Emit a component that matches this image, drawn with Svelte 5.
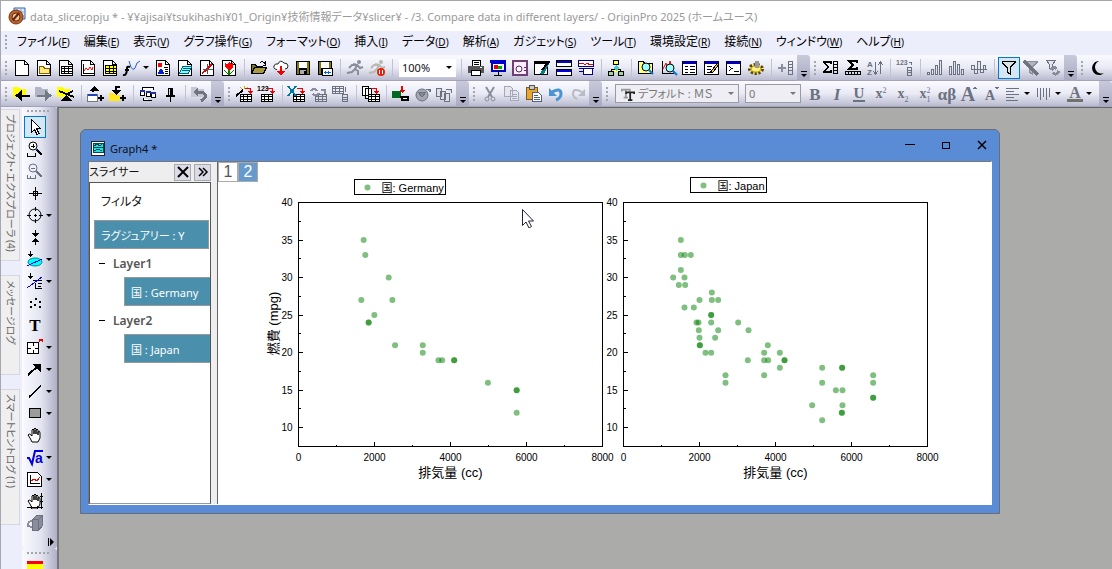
<script lang="ts">
    type Item = { icon?: string; label?: string; kind?: string; drop?: boolean; active?: boolean };

    const path = (d: string, stroke = '#000', fill = 'none', width = 1) =>
        `<path d="${d}" stroke="${stroke}" fill="${fill}" stroke-width="${width}"/>`;
    const solid = (d: string, fill = '#000') => `<path d="${d}" fill="${fill}" stroke="none"/>`;
    const smooth = (inner: string) => `<g shape-rendering="auto">${inner}</g>`;

    const GREY = '#6b7180';
    const page = path('M1.5.5h9l4 4v11h-13zM10.5.5v4h4', '#000', '#fff');
    const grid = (x: number, y: number, stroke = '#000', fill = '#fff') =>
        path(`M${x + 0.5} ${y + 0.5}h11v7h-11zM${x} ${y + 2.5}h11M${x} ${y + 5}h11M${x + 3.5} ${y}v8M${x + 7} ${y}v8`, stroke, fill);
    const folder = (fill = '#ffff00') => solid('M-1 1h6l1 2h6v8h-13z', fill);
    const redArrow = path('M8 2.5h5v3', '#e00') + solid('M10.5 5h5.5l-2.7 3z', '#e00');
    const lens = (x: number, y: number, c = '#000', fill = '#9ff') =>
        smooth(`<circle cx="${x}" cy="${y}" r="4" fill="${fill}" stroke="${c}"/>` + path(`M${x + 3} ${y + 3}l4 4`, c === '#000' ? '#0078d7' : c, 'none', 2));
    const windowFrame = path('M.5 1.5h14v13h-14z', '#000', '#fff') + solid('M1 1h13v3H1z', '#0000b0');
    const runner = (c: string) => smooth(path('M6 4L10 5 8 9 11 11 11 15M8 9L5 12 0 13M10 5L13 8 16 7M9 5L5 5 2 8', c, 'none', 2) + `<circle cx="12" cy="2" r="2" fill="${c}" stroke="none"/>`);
    const bars = (d: string) => path(d, GREY, '#e4e5f0');
    const disk = solid('M1 1h14v14H1z') + solid('M2 2h2v12H2zM12 2h2v12h-2z', '#807800') + solid('M4 2h8v6H4z', '#fff') + solid('M5 10h6v4H5z', '#aaa') + solid('M9 11h2v3H9z');
    const funnel = (c: string, fill: string) => path('M1 1.5h13v1l-5 5v6.5l-3-2v-4.5l-5-5z', c, fill);
    const glyph = (text: string, size = 17, x = 8, y = 14, extra = '') =>
        `<text x="${x}" y="${y}" text-anchor="middle" font-family="Liberation Serif, serif" font-size="${size}" font-weight="bold" fill="${GREY}" stroke="none" ${extra}>${text}</text>`;
    const small = (text: string, x: number, y: number, size = 7, fill = '#000') =>
        `<text x="${x}" y="${y}" font-size="${size}" font-weight="bold" font-family="Liberation Sans, sans-serif" fill="${fill}" stroke="none">${text}</text>`;
    const hand = smooth(path('M5 15L3 11 1 8Q2 6 4 8L5 9V3Q6 1 7 3V7 2Q8 0 9 2V7 3Q10 1 11 3V8 5Q13 3 13 6V11L11 15H5z', '#000', '#fff'));

    const icons: Record<string, string> = {
        newPage: page,
        newFolder: page + path('M3.5 6.5h4l1 2h5v5h-10z', '#806000', '#ffe880'),
        book: page + grid(3, 6),
        graph: page + path('M3.5 4v9.5H14') + smooth(path('M4 11L6 8 8 10 10 7 12 10 13 7', '#f00')),
        matrix: page + path('M3.5 5.5h11v8h-11zM3 8.5h12M3 11h12M7.5 5v9M11 5v9', '#000', '#ff0'),
        func: smooth(path('M5 1Q9 17 13 3L16 1', '#2060d0') + path('M-1 15Q3 16 3 8Q3 6 6 7M1 10h4', '#000', 'none', 2)),
        layout: page + solid('M3 3h4v4H3z', '#f00') + solid('M3 14q1-5 3-5t3 5z', '#0020d0') + path('M9 7.5h4M10 9.5h3M10 11.5h3M10 13.5h3'),
        notes: page + path('M5.5 6.5h9l-3 7h-9zM6 8.5h7M5 10.5h7', '#006080', '#80ffff'),
        excel: page + path('M3 13.5L13 4', '#d00', 'none', 2) + path('M8.5 4v10M4 9.5h10', '#555'),
        flower: page + solid('M4 3l2 1 2-2 2 2 2-1v4l-3 3H7L4 7z', '#f00') + solid('M7 10h2v5H7zM3 10l4 3v2zM13 10l-4 3v2z', '#008000'),
        open: path('M.5 13.5v-9h4l1 2h6v2', '#000', '#808000') + path('M.5 13.5l3-6h12l-3 6z', '#000', '#a89840') + path('M9 3q3-3 5 1M14.5 1v4h-3'),
        cloud: smooth(path('M4 9.5Q0 9 1 6Q2 3 5 4Q7-1 11 3Q15 3 15 6Q15 9 12 9', '#222', '#fff')) + path('M8 6v8', '#e00', 'none', 2) + solid('M4 11h8l-4 5z', '#e00'),
        save: disk,
        saveAs: disk + path('M5.5 8.5h10v7h-10z', '#000', '#fff') + path('M7 12.5h7M8.5 11v3M11.5 11v3', '#06c'),
        run: runner('#8a8e9c'),
        runStop: runner('#b8b8b4') + smooth('<circle cx="12" cy="12" r="4" fill="#e8200c" stroke="none"/>') + path('M10.5 10v4M13.5 10v4', '#fff'),
        print: path('M4.5 6.5v-6h8v6M6 2.5h5M6 4.5h5', '#000', '#fff') + solid('M0 6h16v7H0z', '#555') + path('M3.5 10.5h9v5h-9z', '#000', '#fff') + solid('M12 7h2v1h-2z', '#fff'),
        slide: path('M1.5 2.5h13v8h-13z', '#0000c0', '#fff', 2) + solid('M0 0h16v3H0z', '#0000d0') + solid('M4 5h4v4H4z', '#e00') + solid('M8 6h4v3H8z', '#0a0') + path('M8 11v4M4 15.5h8'),
        camera: path('M1 1h14v14H1z', '#704070', '#fcecff', 2) + smooth('<circle cx="7" cy="9" r="3" fill="#fff" stroke="#602060"/>') + path('M12 7.5h2M12 10.5h2', '#602060'),
        pen: path('M.5 2.5h13v12H.5z', '#000', '#fff') + solid('M0 1h14v3H0z') + solid('M16 2L10 14H6l2-4z', '#008088') + path('M15.5 1L8 10', '#000', 'none', 2),
        stack: path('M.5.5h15v6H.5zM.5 9.5h15v6H.5z', '#000', '#fff') + solid('M1 1h14v2H1zM1 10h14v2H1z', '#0000e0'),
        split: path('M.5.5h15v6H.5z', '#000080', '#fff') + path('M1 4L5 3 7 5 9 3 12 5 15 4', '#e00') + path('M.5 8.5h15M5.5 9v5h9V9M1 11.5h5', '#000080', '#fff'),
        tree: path('M8 5v3M3.5 12V9h9v3M5.5.5h5v4h-5z', '#000', '#ffff60') + path('M.5 11.5h5v4h-5zM10.5 11.5h5v4h-5z', '#000', '#9fd0a0') + solid('M8 5l3 3-3 3-3-3z', '#4cc'),
        findFolder: path('M.5 1.5h5l1 2h8v10H.5z', '#000', '#ffff80') + lens(8, 7),
        findGraph: path('M2.5 1v12H14') + smooth(path('M3 9L6 3 8 10 10 1 12 8', '#e00')) + lens(10, 8),
        list: windowFrame + path('M3 6.5h3M8 6.5h5M3 9.5h3M8 9.5h5M3 12.5h3M8 12.5h5'),
        edit: windowFrame + path('M3 6.5h5M3 9.5h4M3 12.5h3') + path('M14 4L7 13', '#000', '#ff0', 3) + path('M14 4L8 12', '#fc0'),
        command: windowFrame + path('M3 6.5l3 2-3 2M8 11.5h5'),
        gear: smooth('<ellipse cx="8" cy="9" rx="6" ry="4" stroke="#5a4800" stroke-width="4" stroke-dasharray="2 1.5" fill="#f8d820"/><ellipse cx="8" cy="9" rx="5" ry="3" fill="#fff080" stroke="#c8a800"/>') + solid('M7 1h4v7H7z', '#999'),
        addCol: path('M0 8h8M4 4v8', '#8a8e9c', 'none', 2) + path('M10.5 1.5h4v13h-4zM10 4.5h5M10 7.5h5M10 10.5h5', GREY),
        sumCol: path('M8 3.5V2H1l4 5-4 5h7v-2', '#000', 'none', 1.5) + path('M10.5 1.5h4v12h-4zM10 4.5h5M10 7.5h5M10 10.5h5'),
        sumRow: path('M12 3V1H4l4 4-4 4h8V7', '#000', 'none', 1.5) + path('M.5 11.5h15v3H.5zM3.5 11v4M6.5 11v4M9.5 11v4M12.5 11v4'),
        sort: small('A', 0, 7, 8, GREY) + small('Z', 0, 15, 8, GREY) + path('M8.5 2v12M6 11l2.5 3L11 11M13.5 14V2M11 5l2.5-3L16 5', GREY),
        numCol: small('123', -1, 5, 7, GREY) + path('M12 2.5h2v2M10.5 7.5h4v8h-4zM10 10h5M10 12.5h5', GREY),
        barsUp: bars('M.5 12.5h2v2h-2zM4.5 9.5h2v5h-2zM8.5 5.5h2v9h-2zM12.5.5h2v14h-2z'),
        barsDown: bars('M.5 6.5h2v8h-2zM4.5 1.5h2v13h-2zM8.5 4.5h2v10h-2zM12.5 9.5h2v5h-2z'),
        barsMid: bars('M.5 5.5h3v4h-3zM3.5 9.5h3v4h-3zM6.5 1.5h3v8h-3zM9.5 9.5h3v3h-3zM12.5 5.5h2v4h-2zM0 9.5h16'),
        filter: funnel('#000', '#dde4e4'),
        filterOff: funnel('#8a8e9c', '#b0b4c0') + path('M1 1l14 14', '#70747f', 'none', 3),
        filterRedo: path('M1.5.5h9l-3 4v5l-3-1v-4z', GREY, '#e4e5f0') + path('M6 10q3-4 6-1M14 11q-3 5-6 2', '#8a8e9c', 'none', 3),
        moon: smooth(solid('M9 1A7 7 0 1 0 14 13A6.5 6.5 0 0 1 9 1z')),
        back: folder() + path('M4 9.5h12', '#000', 'none', 2) + solid('M8 4v11L1 9.5z'),
        forward: folder('#b2b5c4') + path('M1 9.5h11', '#747986', 'none', 2) + solid('M9 4v11l7-5.5z', '#747986'),
        up: folder() + path('M1 5l15 6', '#000', 'none', 2) + solid('M2 15h12l-6-6z') + path('M9 8l6-3', '#000', 'none', 2),
        importUp: path('M-.5 8.5h10v7h-10z', '#777', '#fff') + solid('M0 8h9v2H0z', '#2244bb') + path('M5 6V4h5', '#000', 'none', 2) + solid('M1 5l5-5 5 5z') + path('M13 9v6M10 12h6', '#000', 'none', 2),
        importDown: solid('M-1 7h5l1 2h5v6H-1z', '#ffe820') + path('M10 1H6v4', '#000', 'none', 2) + solid('M1 4h10L6 9z') + path('M13 9v6M10 12h6', '#000', 'none', 2),
        exchange: path('M2.5 4V1.5h11V4M3.5 12v2.5h8M.5 4.5h4v5h-4zM6.5 5.5h4v5h-4zM11.5 6.5h4v5h-4z', '#000', '#fff') + path('M0 5h5M6 6h5M11 7h5', '#2030a0', 'none', 2),
        pin: solid('M6 2h5v8H6zM4 9h9v2H4zM8 10h1v6H8z') + path('M7.5 3v6', '#ddd'),
        undoGrey: folder('#c6c8d4') + path('M4 6h6q5 2 3 6l-4 3', '#70747f', 'none', 3) + solid('M6 1v9L1 6z', '#70747f'),
        wand: grid(3, 8) + path('M-1 10L6 4', '#000', 'none', 2) + path('M7 0v3M3 1l2 2M11 1l-2 2', '#d0b000') + redArrow,
        num123: small('123', -2, 5) + grid(2, 8) + redArrow,
        xl: grid(4, 8) + path('M-1 0l8 10M7 0L-1 10', '#0078a0', 'none', 2) + redArrow,
        refresh: grid(4, 8, GREY, '#dcdde8') + path('M0 5q3-5 6 0M8 7q-3 4-6 1M10 3.5h4v4', '#8a8e9c', 'none', 2),
        tables: grid(-1, 0, GREY, '#eeeef6') + path('M9.5 8.5h5v7h-5zM9 11h6M9 13h6M12.500 1v5', GREY),
        sheets: path('M-.5.5h6v9h-6zM2.5 2.5h6v10h-6z', '#000', '#fff') + grid(5, 8) + redArrow,
        plug: solid('M-1 5h9v7h-9z', '#006820') + path('M9 0v5', '#e00', 'none', 2) + solid('M6 4h6L9 7z', '#e00') + path('M7 11h8v3H9v-3', '#000', '#fff', 2),
        globe: smooth(`<circle cx="7" cy="9" r="6" fill="#a4a7b2" stroke="${GREY}"/>`) + path('M3 6l4 5 4-5zM11 3h4v3', GREY, '#858995'),
        copies: path('M-.5 2.5h5v8h-5zM3.5 5.5h5v8h-5zM7.5 7.5h5v8h-5zM9 3.5h5v3', GREY, '#dddee9'),
        cut: smooth(path('M4 1l6 10M12 1L6 11', '#8a8e9c', 'none', 2) + '<circle cx="5" cy="13" r="2" stroke="#8a8e9c"/><circle cx="11" cy="13" r="2" stroke="#8a8e9c"/>'),
        copy: path('M.5.5h6l2 2v8h-8zM6.5 4.5h6l2 2v8h-8zM8 8.5h5M8 10.5h5M8 12.5h5', '#a4a7b5', '#e4e5ee'),
        paste: path('M.5 1.5h11v12H.5z', '#7a5a20', '#e8a830') + path('M3.5-.5h5v4h-5z', '#555', '#ccc') + path('M6.5 6.5h6l3 3v6h-9zM8 9.5h4M8 11.5h6M8 13.5h6', '#506080', '#fff'),
        undo: smooth(path('M4 6q9-5 9 2q0 4-5 6', '#4a94d4', 'none', 3) + solid('M1 2v8h8z', '#4a94d4')),
        redo: smooth(path('M12 6q-9-5-9 2q0 3 4 5', '#b8bac6', 'none', 2) + solid('M15 3v7H8z', '#b8bac6')),
        bold: glyph('B'),
        italic: glyph('I', 17, 8, 14, 'font-style="italic"'),
        underline: glyph('U', 15, 8, 12) + solid('M2 14h12v2H2z', GREY),
        sup: glyph('x<tspan font-size="8" font-weight="normal" dy="-5">2</tspan>', 14, 8, 12),
        sub: glyph('x<tspan font-size="8" font-weight="normal" dy="4">2</tspan>', 14, 8, 12),
        supsub: glyph('x<tspan font-size="8" font-weight="normal" dy="-5">2</tspan><tspan font-size="8" font-weight="normal" dx="-4" dy="9">1</tspan>', 14, 8, 12),
        greek: glyph('αβ'),
        bigger: glyph('A', 20, 7, 15) + solid('M12 3l2-3 2 3z', GREY),
        smaller: glyph('A', 14, 7, 14) + solid('M11 1h5l-2 3z', GREY),
        align: path('M1 2.5h13M1 5.5h8M1 8.5h13M1 11.5h8M1 14.5h12', GREY),
        lines: path('M1.5 2v9M4.5 2v12M7.5 2v9M10.5 2v12M13.5 2v9', GREY),
        fontColor: glyph('A', 16, 8, 12) + solid('M0 13h16v3H0z', '#70706c'),
        pointer: path('M4.5.5v13l3-3 2.5 5 2-1-2.5-5h4z', '#000', '#fff'),
        zoomIn: lens(6, 5, '#000', '#fff') + path('M4 5h4M6 3v4M.5 12v3h8v-3') + path('M10 9l5 5', '#000', 'none', 2),
        zoomOut: lens(6, 5, GREY, '#eef') + path('M4 5h4M.5 12v3h8v-3M3.5 13v2', GREY) + path('M10 9l5 5', GREY, 'none', 2),
        cross: path('M8.5 2v13M2 8.5h13M6.5 6.5h4v4h-4z'),
        target: smooth('<circle cx="8" cy="8" r="6" stroke="#000"/>') + path('M8.5 0v4M8.5 12v4M0 8.5h4M12 8.5h4M7 8.5h3M8.5 7v3'),
        squeeze: path('M8 1v4M8 12v4') + solid('M4 4h8L8 8zM4 13h8L8 9z'),
        lasso: smooth('<ellipse cx="8" cy="11" rx="7" ry="4" fill="#0ff" stroke="#088"/>') + path('M0 15L15 8', '#00f') + path('M3 0v3') + solid('M0 3h7L3.5 6z'),
        maskLine: path('M6 7.5h9M8.5 10v6M8 15.5h7M11 10.5h4M11 13h3') + path('M0 15L15 4', '#00f') + path('M3 0v3') + solid('M0 3h7L3.5 6z'),
        dots: solid('M8 3h2v2H8zM3 6h2v2H3zM12 6h2v2h-2zM7 9h2v2H7zM3 11h2v2H3zM12 11h2v2h-2z'),
        text: '<text x="8" y="14" text-anchor="middle" font-family="Liberation Serif, serif" font-size="17" font-weight="bold" fill="#000" stroke="none">T</text>',
        scale: path('M.5 3.5h11v11H.5zM1 9h3M8 9h3M6 4v3M6 11v3', '#000', '#fff') + path('M12 3V0h3v3M12 1.5h3', '#e00'),
        arrow: path('M1 14L11 5', '#000', 'none', 2) + solid('M5 3h9v9z'),
        line: path('M2 14L14 3', '#000', 'none', 1.5),
        rect: path('M2.5 3.5h11v9h-11z', '#000', '#9c9c9c'),
        hand,
        sqrt: smooth(path('M0 9h2l3 6 3-13h8', '#00d', 'none', 2)) + small('a', 8, 14, 14, '#00d'),
        graphTool: path('M.5 1.5h10l4 4v10H.5z', '#000', '#fff') + path('M3.5 4v8.5H13') + path('M4 10l3-2 3 2 3-4', '#e00'),
        pan: hand + path('M14.5 0v16M0 14.5h16M13 3.5h3M13 8.5h3M4 13v3M10 13v3'),
        cube: path('M5.5 4.5l4-4h6v10l-4 5h-6zM5.5 4.5h6v11M11.5 4.5l4-4', GREY, '#8a8e9c') + path('M5 6q-5 1-4 5l4 1', '#8a8e9c', 'none', 2)
    };

    const btn = (icon: string, extra: Partial<Item> = {}): Item => ({ icon, ...extra });
    const row = (names: string): Item[] =>
        names.split(' ').map((n) => (['|', '>', ':'].includes(n) ? { kind: n } : n.endsWith('+') ? btn(n.slice(0, -1), { drop: true }) : btn(n)));

    const topRow: Item[] = [
        ...row(': newPage newFolder book graph matrix func+ layout notes excel flower | open cloud save saveAs | run runStop |'),
        { kind: 'zoom' },
        ...row('| print slide camera pen stack split | tree | findFolder findGraph list edit command gear | addCol > : sumCol sumRow sort | numCol | barsUp barsDown barsMid |'),
        btn('filter', { active: true }),
        ...row('filterOff filterRedo > : moon')
    ];
    const secondRow: Item[] = [
        ...row(': back forward up | importUp importDown | exchange pin | undoGrey > : wand num123 | xl refresh tables | sheets | plug globe copies > : cut copy paste undo redo > :'),
        { kind: 'font' },
        { kind: 'size' },
        ...row('bold italic underline sup sub supsub greek bigger smaller align+ lines+ fontColor+ >')
    ];
    const tools: Item[] = [
        btn('pointer', { active: true }),
        ...row('zoomIn zoomOut cross target+ squeeze lasso+ maskLine+ dots text scale+ arrow+ line+ rect+ hand sqrt+ graphTool+ pan cube')
    ];

    const menus = [
        ['ファイル', 'F'], ['編集', 'E'], ['表示', 'V'], ['グラフ操作', 'G'], ['フォーマット', 'O'],
        ['挿入', 'I'], ['データ', 'D'], ['解析', 'A'], ['ガジェット', 'S'], ['ツール', 'T'],
        ['環境設定', 'R'], ['接続', 'N'], ['ウィンドウ', 'W'], ['ヘルプ', 'H']
    ];
    const docks = ['プロジェクト・エクスプローラ (4)', 'メッセージログ', 'スマートヒントログ (1)'];
    const layers = [
        { name: 'Layer1', value: '国 : Germany' },
        { name: 'Layer2', value: '国 : Japan' }
    ];

    // [displacement, mpg]
    const germany = [
        [1714, 35], [1758, 33], [2374, 30], [1653, 27], [2470, 27], [1996, 25], [1846, 24], [1846, 24], [2541, 21],
        [3270, 21], [3270, 20], [3683, 19], [3780, 19], [4097, 19], [4097, 19], [4985, 16], [5741, 15], [5741, 15], [5741, 12]
    ];
    const japan = [
        [1509, 35], [1509, 33], [1614, 33], [1772, 33], [1509, 31], [1307, 30], [1605, 30], [1456, 29], [1623, 29],
        [2325, 28], [2000, 27], [2325, 27], [2491, 27], [1605, 26], [1851, 26], [2307, 25], [2307, 25], [1921, 24],
        [1974, 24], [2307, 24], [3018, 24], [1982, 23], [2491, 23], [3290, 23], [2000, 22], [2412, 22], [2009, 21],
        [2009, 21], [3798, 21], [2158, 20], [2307, 20], [3702, 20], [4114, 20], [3272, 19], [3702, 19], [3807, 19],
        [4237, 19], [4237, 19], [4114, 18], [5228, 18], [5754, 18], [5754, 18], [2684, 17], [3702, 17], [6570, 17],
        [2684, 16], [5228, 16], [6570, 16], [5588, 15], [5763, 15], [6570, 14], [6570, 14], [4965, 13], [5763, 13],
        [5746, 12], [5746, 12], [5228, 11]
    ];
    const plots = [
        { x: 80, country: 'Germany', points: germany, legend: { x: 56, y: -23, w: 91 }, ylabel: true },
        { x: 405, country: 'Japan', points: japan, legend: { x: 67, y: -25, w: 76 }, ylabel: false }
    ];
    const W = 304;
    const H = 244;
    const sx = (v: number) => (v / 8000) * W;
    const sy = (v: number) => ((40 - v) / 32.5) * H;
    const yTicks = [40, 35, 30, 25, 20, 15, 10];
    const xTicks = [0, 2000, 4000, 6000, 8000];

    let activeLayer = $state(2);
    let zoom = $state('100%');
</script>

{#snippet toolButton(item: Item)}
    <button class="tool" class:active={item.active} aria-label={item.icon}>
        <svg viewBox="0 0 16 16" fill="none" stroke="#000" shape-rendering="crispEdges">{@html icons[item.icon ?? '']}</svg>
    </button>
    {#if item.drop}
        <button class="drop" aria-label="{item.icon} options"></button>
    {/if}
{/snippet}

{#snippet toolbar(items: Item[])}
    <div class="toolbar">
        {#each items as item}
            {#if item.kind === ':'}
                <i class="grip"></i>
            {:else if item.kind === '|'}
                <i class="sep"></i>
            {:else if item.kind === '>'}
                <button class="overflow" aria-label="More buttons"></button>
            {:else if item.kind === 'zoom'}
                <span class="combo zoom">
                    <select aria-label="Zoom" bind:value={zoom}><option>100%</option><option>200%</option></select>
                </span>
            {:else if item.kind === 'font'}
                <span class="combo flat font">
                    <svg viewBox="0 0 16 16" fill="none" stroke="#555" stroke-width="2">
                        <path d="M1 5V3h9v2M5.500 3v9M3 12h5" stroke="#999" />
                        <path d="M6 8V6h9v2M10.500 6v9M8 15h5" stroke="#222" />
                    </svg>
                    <select aria-label="Font"><option>デフォルト : ＭＳ</option></select>
                </span>
            {:else if item.kind === 'size'}
                <span class="combo flat size">
                    <select aria-label="Font size"><option>0</option></select>
                </span>
            {:else}
                {@render toolButton(item)}
            {/if}
        {/each}
    </div>
{/snippet}

<div class="app">
    <header class="titlebar">
        <svg viewBox="0 0 16 16">
            <path d="M5 0h11v11H5z" fill="#dfeaff" stroke="#2860b8" />
            <path d="M8 1v9M12 1v9M5 4h10M5 8h10" stroke="#8ab" />
            <circle cx="7" cy="9" r="7" fill="#b8622c" stroke="#7c3410" />
            <circle cx="7" cy="9" r="4" fill="#f0c49c" stroke="#6a2c0c" />
            <path d="M4 12l6-7" stroke="#5c2408" stroke-width="2" />
        </svg>
        <span>data_slicer.opju * - ¥¥ajisai¥tsukihashi¥01_Origin¥技術情報データ¥slicer¥ - /3. Compare data in different layers/ - OriginPro 2025 (ホームユース)</span>
    </header>

    <nav class="menubar">
        <i class="grip"></i>
        {#each menus as [name, key]}
            <button>{name}<small>(<u>{key}</u>)</small></button>
        {/each}
    </nav>

    {@render toolbar(topRow)}
    {@render toolbar(secondRow)}

    <div class="workspace">
        <aside class="docks">
            {#each docks as dock}
                <button>{dock}</button>
            {/each}
        </aside>

        <aside class="toolbox">
            <div class="tools">
                <i class="grip flat-grip"></i>
                {#each tools as item}
                    <div class="tool-row">{@render toolButton(item)}</div>
                {/each}
                <button class="more-tools" aria-label="More tools">
                    <svg viewBox="0 0 6 8"><path d="M0 0h1v8H0zM2 0l4 4-4 4z" /></svg>
                </button>
            </div>
            <div class="tools rest">
                <i class="grip flat-grip"></i>
                <span class="stripes"></span>
            </div>
        </aside>

        <main class="desktop">
            <section class="window">
                <div class="window-title">
                    <svg viewBox="0 0 16 16" shape-rendering="crispEdges">
                        <path d="M1 1h13v14H1z" fill="#fff" stroke="#222" />
                        <path d="M3 3h10v9H3z" fill="#20e0e0" stroke="#064850" />
                        <path d="M3 7.500h10M4 5.500l3-1 3 1 2-1M4 10.500l4-1 4 1" fill="none" stroke="#064850" />
                    </svg>
                    <h1>Graph4 *</h1>
                    <button aria-label="Minimize"><svg viewBox="0 0 10 10" shape-rendering="crispEdges"><path d="M0 4.500h10" /></svg></button>
                    <button aria-label="Maximize"><svg viewBox="0 0 10 10" shape-rendering="crispEdges"><path d="M1.500 2.500h7v6h-7z" /></svg></button>
                    <button aria-label="Close"><svg viewBox="0 0 10 10"><path d="M1 1l8 8M9 1L1 9" stroke-width="1.500" /></svg></button>
                </div>

                <div class="window-body">
                    <aside class="slicer">
                        <div class="slicer-head">
                            <h2>スライサー</h2>
                            <button aria-label="Close slicer"><svg viewBox="0 0 14 14"><path d="M2 2l10 10M12 2L2 12" stroke-width="2" /></svg></button>
                            <button aria-label="Expand slicer"><svg viewBox="0 0 14 14"><path d="M3 3l4 4-4 4M7 3l4 4-4 4" stroke-width="1.500" /></svg></button>
                        </div>
                        <div class="filters">
                            <h3>フィルタ</h3>
                            <button class="chip">ラグジュアリー : Y</button>
                            {#each layers as layer}
                                <details open>
                                    <summary>{layer.name}</summary>
                                    <button class="chip nested">{layer.value}</button>
                                </details>
                            {/each}
                        </div>
                    </aside>

                    <div class="graph">
                        <div class="layer-tabs">
                            {#each [1, 2] as n}
                                <button class:selected={activeLayer === n} onclick={() => (activeLayer = n)}>{n}</button>
                            {/each}
                        </div>
                        <svg class="plot" viewBox="0 0 773 322" role="img" aria-label="燃費 (mpg) / 排気量 (cc)">
                            {#each plots as plot}
                                <g transform="translate({plot.x + 0.5} 20.5)">
                                    <rect class="frame" width={W} height={H} />
                                    {#each yTicks as t}
                                        <path class="tick" d="M0 {Math.round(sy(t))}h4" />
                                        {#if t > 10}<path class="tick" d="M0 {Math.round(sy(t - 2.5))}h2" />{/if}
                                        <text class="num" x="-6" y={Math.round(sy(t)) + 3} text-anchor="end">{t}</text>
                                    {/each}
                                    {#each xTicks as t}
                                        <path class="tick" d="M{sx(t)} {H}v-5" />
                                        {#if t < 8000}<path class="tick" d="M{sx(t + 1000)} {H}v-2" />{/if}
                                        <text class="num" x={sx(t)} y={H + 14} text-anchor="middle">{t}</text>
                                    {/each}
                                    {#each plot.points as [x, y]}
                                        <circle cx={sx(x)} cy={sy(y)} r="3" />
                                    {/each}
                                    <rect class="frame" x={plot.legend.x} y={plot.legend.y} width={plot.legend.w} height="15" />
                                    <circle cx={plot.legend.x + 13} cy={plot.legend.y + 8} r="3" />
                                    <text class="legend" x={plot.legend.x + 27} y={plot.legend.y + 12}>国: {plot.country}</text>
                                    <text class="axis" x={W / 2} y={H + 30} text-anchor="middle">排気量 (cc)</text>
                                    {#if plot.ylabel}
                                        <text class="axis" transform="translate(-21 121) rotate(-90)" text-anchor="middle">燃費 (mpg)</text>
                                    {/if}
                                </g>
                            {/each}
                        </svg>
                    </div>
                </div>
            </section>

            <svg class="cursor" viewBox="0 0 12 19">
                <path d="M.500.500v16l3.500-3.500 3 6 2.500-1.500-3-5.500h5z" fill="#fff" stroke="#223" />
            </svg>
        </main>
    </div>
</div>

<style>
    :global(body) {
        background: #edeefb;
    }

    .app {
        height: 100vh;
        display: flex;
        flex-direction: column;
        overflow: hidden;
        box-sizing: border-box;
        border-top: 1px solid #a6a6a6;
        border-left: 1px solid #a6a6b4;
        background: #edeefb;
        font-family: "Noto Sans", "Noto Sans CJK JP", sans-serif;
        font-feature-settings: "palt";
        font-size: 11px;
        color: #111;
    }

    button,
    select {
        font: inherit;
        font-feature-settings: inherit;
        color: inherit;
        border: none;
        background: none;
        padding: 0;
        margin: 0;
        box-sizing: border-box;
    }

    h1,
    h2,
    h3 {
        margin: 0;
        font-size: 11px;
        font-weight: 400;
    }

    .titlebar {
        flex: none;
        height: 30px;
        display: flex;
        align-items: center;
        gap: 5px;
        padding-left: 8px;
        background: #fff;
        color: #999;
        white-space: nowrap;
    }

    .titlebar svg {
        width: 16px;
        height: 16px;
        fill: none;
        overflow: visible;
    }

    .menubar {
        flex: none;
        height: 24px;
        display: flex;
        align-items: center;
        gap: 14px;
        padding-bottom: 2px;
        box-sizing: border-box;
        white-space: nowrap;
    }

    .menubar .grip {
        margin-right: -8px;
    }

    .menubar button {
        font-size: 12px;
        line-height: 20px;
        color: #000;
    }

    .menubar small {
        font-size: 10px;
    }

    .grip {
        flex: none;
        width: 10px;
        height: 14px;
        background: repeating-linear-gradient(#a5a5ac 0 2px, transparent 2px 4px) 4px 0 / 2px 100% no-repeat;
    }

    .toolbar {
        flex: none;
        height: 26px;
        display: flex;
        align-items: center;
        background: linear-gradient(#fafaff, #e9eaf4 50%, #babbd0);
        border-bottom: 1px solid #a2a3b8;
        box-sizing: border-box;
    }

    .tool {
        flex: none;
        width: 22px;
        height: 22px;
        display: flex;
        align-items: center;
        justify-content: center;
    }

    .tool svg {
        flex: none;
        width: 16px;
        height: 16px;
        overflow: visible;
    }

    .tool.active {
        border: 1px solid #0078d7;
        background: #d3e7f7;
    }

    .drop {
        flex: none;
        width: 9px;
        height: 22px;
        display: flex;
        align-items: center;
    }

    .drop::before {
        content: "";
        border: 3px solid transparent;
        border-top-color: #000;
        border-bottom: none;
    }

    .sep {
        flex: none;
        width: 8px;
        height: 18px;
        background: linear-gradient(#c2c3d0, #c2c3d0) center / 1px 100% no-repeat;
    }

    .overflow {
        flex: none;
        width: 13px;
        height: 26px;
        display: flex;
        flex-direction: column;
        align-items: center;
        justify-content: flex-end;
        gap: 2px;
        padding-bottom: 4px;
        border-radius: 0 3px 3px 0;
        background: linear-gradient(#c8c9da, #a9aac2);
    }

    .overflow::before {
        content: "";
        width: 6px;
        height: 1px;
        background: #000;
    }

    .overflow::after {
        content: "";
        border: 3px solid transparent;
        border-top-color: #000;
        border-bottom: none;
    }

    .overflow:last-child {
        margin-left: auto;
    }

    .combo {
        flex: none;
        height: 18px;
        display: flex;
        align-items: center;
        box-sizing: border-box;
        margin-left: 3px;
        background: #fff;
    }

    .combo::after {
        content: "";
        margin-right: 4px;
        border: 3px solid transparent;
        border-top-color: #000;
        border-bottom: none;
    }

    .combo select {
        appearance: none;
        flex: 1;
        min-width: 0;
        outline: none;
        padding-left: 3px;
    }

    .combo.zoom {
        width: 57px;
        margin-right: 1px;
    }

    .combo.flat {
        height: 19px;
        border: 1px solid #9a9aa4;
        background: #eeeef4;
        color: #777;
    }

    .combo.flat::after {
        border-top-color: #777;
    }

    .combo.font {
        width: 124px;
    }

    .combo.font svg {
        width: 14px;
        height: 14px;
        margin-left: 5px;
    }

    .combo.size {
        width: 56px;
        margin-left: 6px;
        margin-right: 3px;
    }

    .workspace {
        flex: 1;
        min-height: 0;
        display: flex;
    }

    .docks {
        flex: none;
        width: 21px;
        display: flex;
        flex-direction: column;
        align-items: flex-start;
        gap: 14px;
        padding-top: 2px;
        box-sizing: border-box;
    }

    .docks button {
        writing-mode: vertical-rl;
        text-orientation: sideways;
        width: 19px;
        min-height: 100px;
        padding: 4px 0 8px;
        border: 1px solid #d6d6dc;
        border-left: none;
        background: #efefef;
        color: #666;
        font-size: 10px;
        line-height: 17px;
        white-space: nowrap;
        text-align: left;
    }

    .docks button:last-child {
        min-height: 136px;
    }

    .toolbox {
        flex: none;
        width: 35px;
        display: flex;
        flex-direction: column;
    }

    .tools {
        display: flex;
        flex-direction: column;
        padding-left: 2px;
        background: linear-gradient(90deg, #fafaff, #e3e4f0 55%, #aeafc6);
        border-radius: 2px 2px 4px 4px;
    }

    .tools.rest {
        flex: 1;
    }

    .flat-grip {
        width: 24px;
        height: 6px;
        margin: 2px 0 1px 3px;
        background: repeating-linear-gradient(90deg, #a5a5ac 0 2px, transparent 2px 4px) 0 1px / 100% 2px no-repeat;
    }

    .tool-row {
        display: flex;
    }

    .more-tools {
        height: 15px;
        display: flex;
        align-items: center;
        justify-content: flex-end;
        padding-right: 3px;
    }

    .more-tools svg {
        width: 6px;
        height: 8px;
    }

    .stripes {
        width: 16px;
        height: 12px;
        margin: 3px 0 0 3px;
        background: linear-gradient(#f00 3px, #ff0 3px);
    }

    .desktop {
        flex: 1;
        position: relative;
        overflow: hidden;
        background: #ababa9;
        border-top: 1px solid #666;
        border-left: 2px solid #777;
    }

    .window {
        position: absolute;
        left: 21px;
        top: 21px;
        width: 920px;
        display: flex;
        flex-direction: column;
        box-sizing: border-box;
        padding: 0 7px 8px;
        border: 1px solid #666c78;
        border-radius: 6px 6px 0 0;
        background: #5a8bd5;
    }

    .window-title {
        height: 31px;
        display: flex;
        align-items: center;
    }

    .window-title > svg {
        width: 16px;
        height: 16px;
        margin: 4px 4px 0 2px;
    }

    .window-title h1 {
        flex: 1;
        padding-top: 5px;
    }

    .window-title button {
        width: 36px;
        height: 30px;
    }

    .window-title button:last-child {
        margin-right: -8px;
    }

    .window-title button svg {
        width: 10px;
        height: 10px;
        fill: none;
        stroke: #000;
    }

    .window-body {
        display: flex;
        background: #eee;
        border: 1px solid #777;
        border-right-color: #fff;
        border-bottom-color: #fff;
    }

    .slicer {
        flex: none;
        width: 122px;
        display: flex;
        flex-direction: column;
    }

    .slicer-head {
        height: 20px;
        display: flex;
        align-items: center;
        gap: 3px;
    }

    .slicer-head h2 {
        flex: 1;
        line-height: 16px;
    }

    .slicer-head button {
        width: 17px;
        height: 17px;
        display: flex;
        align-items: center;
        justify-content: center;
        border: 1px solid #a9a9a9;
        background: #dcdce8;
    }

    .slicer-head svg {
        width: 14px;
        height: 14px;
        flex: none;
        fill: none;
        stroke: #000;
    }

    .filters {
        flex: 1;
        border: 1px solid #555;
        border-bottom-color: #999;
        background: #fff;
        padding-left: 4px;
    }

    .filters h3 {
        font-size: 12px;
        line-height: 20px;
        padding: 9px 0 8px 7px;
    }

    .chip {
        display: block;
        width: 115px;
        height: 29px;
        padding-left: 6px;
        border: 1px solid #999;
        background: #4a90ad;
        color: #fff;
        text-align: left;
        white-space: nowrap;
    }

    .chip.nested {
        margin-left: 30px;
        border-right: none;
    }

    details {
        overflow: hidden;
    }

    summary {
        display: flex;
        align-items: center;
        gap: 8px;
        padding-left: 5px;
        height: 28px;
        font-size: 12px;
        font-weight: 600;
        color: #555;
        list-style: none;
    }

    summary::before {
        content: "";
        width: 6px;
        height: 1px;
        background: #000;
    }

    .graph {
        flex: 1;
        margin-left: 6px;
        background: #fff;
        border-left: 1px solid #666;
    }

    .layer-tabs {
        display: flex;
        height: 20px;
    }

    .layer-tabs button {
        width: 20px;
        height: 20px;
        border: 1px solid #aaa;
        font-family: "Liberation Sans", sans-serif;
        font-size: 16px;
        line-height: 18px;
        color: #555;
    }

    .layer-tabs .selected {
        background: #6699cc;
        color: #fff;
    }

    .plot {
        display: block;
        width: 100%;
        overflow: visible;
        font-family: "Liberation Sans", "Noto Sans CJK JP", sans-serif;
    }

    .frame,
    .tick {
        fill: none;
        stroke: #000;
        shape-rendering: crispEdges;
    }

    .plot circle {
        fill: #008000;
        fill-opacity: 0.5;
    }

    .num {
        font-size: 10px;
    }

    .legend {
        font-size: 11px;
    }

    .axis {
        font-size: 13px;
    }

    .cursor {
        position: absolute;
        left: 463px;
        top: 101px;
        width: 12px;
        height: 19px;
    }
</style>
